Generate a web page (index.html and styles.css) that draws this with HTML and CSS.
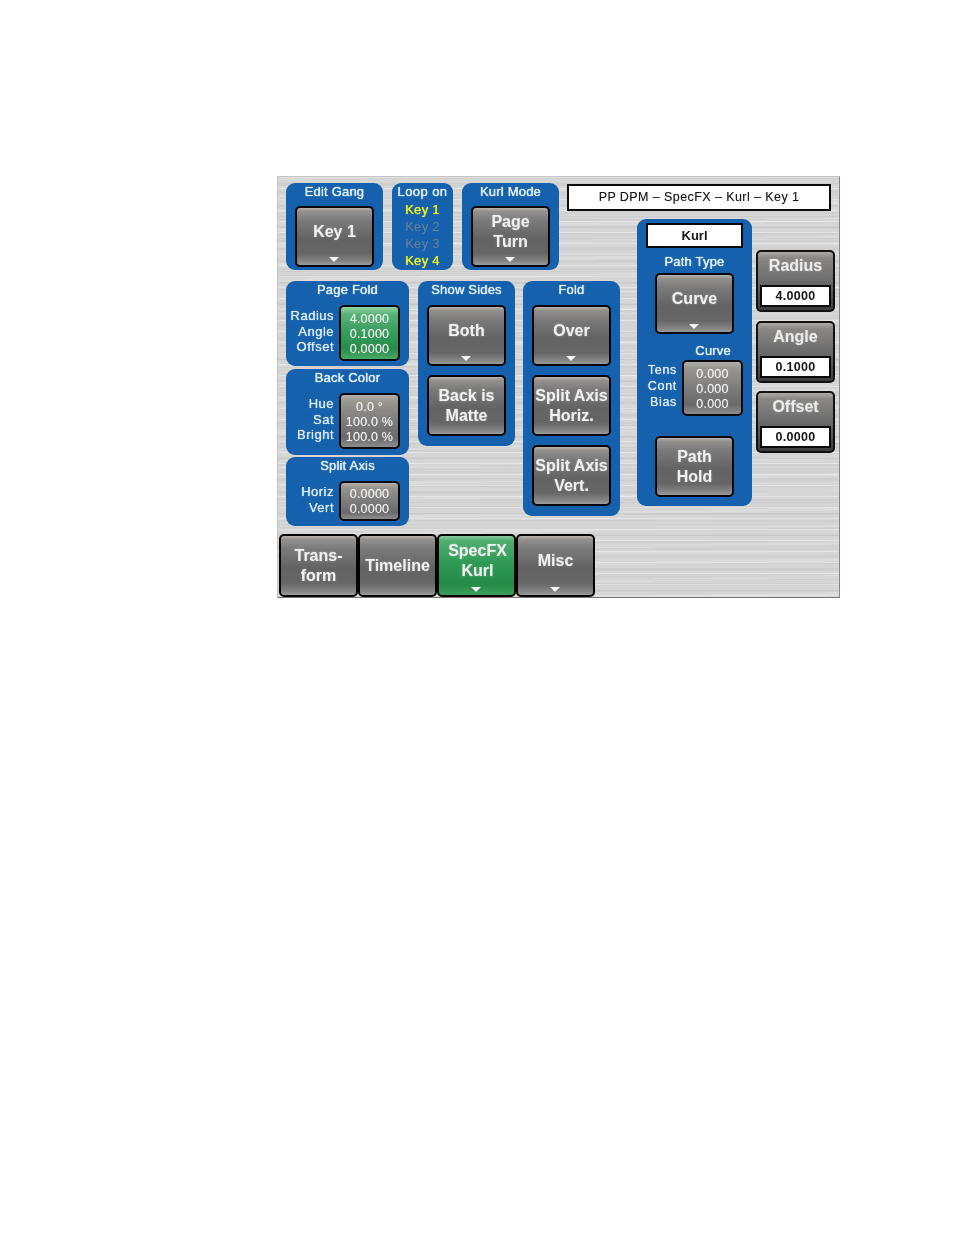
FILE: index.html
```html
<!DOCTYPE html>
<html lang="en">
<head>
<meta charset="utf-8">
<title>PP DPM - SpecFX - Kurl - Key 1</title>
<link rel="stylesheet" href="styles.css">
</head>
<body>
<main class="panel">
  <div class="board">
    <div class="top-row">
      <section class="group wide top-group">
        <h2 class="group-title tight">Edit Gang</h2>
        <button class="btn has-arrow">Key 1</button>
      </section>
      <section class="group loop top-group">
        <h2 class="group-title loop-title">Loop on</h2>
        <div class="key on">Key 1</div>
        <div class="key off">Key 2</div>
        <div class="key off">Key 3</div>
        <div class="key on">Key 4</div>
      </section>
      <section class="group wide top-group">
        <h2 class="group-title tight">Kurl Mode</h2>
        <button class="btn has-arrow">Page<br>Turn</button>
      </section>
    </div>

    <div class="title-box">PP DPM – SpecFX – Kurl – Key 1</div>

    <div class="lower-row">
      <div class="stack">
        <section class="group fold-group">
          <h2 class="group-title">Page Fold</h2>
          <div class="field">
            <div class="labels"><span>Radius</span><span>Angle</span><span>Offset</span></div>
            <div class="values green"><span>4.0000</span><span>0.1000</span><span>0.0000</span></div>
          </div>
        </section>
        <section class="group color-group">
          <h2 class="group-title">Back Color</h2>
          <div class="field">
            <div class="labels"><span>Hue</span><span>Sat</span><span>Bright</span></div>
            <div class="values"><span>0.0 °</span><span>100.0 %</span><span>100.0 %</span></div>
          </div>
        </section>
        <section class="group split-group">
          <h2 class="group-title">Split Axis</h2>
          <div class="field">
            <div class="labels two"><span>Horiz</span><span>Vert</span></div>
            <div class="values two"><span>0.0000</span><span>0.0000</span></div>
          </div>
        </section>
      </div>
      <section class="group wide column">
        <h2 class="group-title">Show Sides</h2>
        <button class="btn has-arrow">Both</button>
        <button class="btn">Back is<br>Matte</button>
      </section>
      <section class="group wide column">
        <h2 class="group-title">Fold</h2>
        <button class="btn has-arrow">Over</button>
        <button class="btn">Split Axis<br>Horiz.</button>
        <button class="btn">Split Axis<br>Vert.</button>
      </section>
    </div>

    <section class="group kurl">
      <div class="kurl-name">Kurl</div>
      <h2 class="group-title path-title">Path Type</h2>
      <button class="btn has-arrow">Curve</button>
      <h2 class="group-title curve-title">Curve</h2>
      <div class="field curve-field">
        <div class="labels"><span>Tens</span><span>Cont</span><span>Bias</span></div>
        <div class="values"><span>0.000</span><span>0.000</span><span>0.000</span></div>
      </div>
      <button class="btn hold">Path<br>Hold</button>
    </section>

    <div class="side">
      <div class="side-btn"><span class="side-label">Radius</span><span class="side-value">4.0000</span></div>
      <div class="side-btn"><span class="side-label">Angle</span><span class="side-value">0.1000</span></div>
      <div class="side-btn"><span class="side-label">Offset</span><span class="side-value">0.0000</span></div>
    </div>
  </div>

  <nav class="tabs">
    <button class="btn tab">Trans-<br>form</button>
    <button class="btn tab">Timeline</button>
    <button class="btn tab active has-arrow">SpecFX<br>Kurl</button>
    <button class="btn tab has-arrow">Misc</button>
  </nav>
</main>
</body>
</html>
```
FILE: styles.css
```css
* { box-sizing: border-box; }

html, body { margin: 0; background: #fff; }

body {
  width: 954px;
  height: 1235px;
  padding: 176px 0 0 277px;
  font-family: "Liberation Sans", Arial, sans-serif;
  overflow: hidden;
}

.panel {
  width: 563px;
  height: 422px;
  display: flex;
  flex-direction: column;
  padding: 6px 0 0 1px;
  border: 1px solid #c4c4c4;
  border-right-color: #8d7f9c;
  border-bottom-color: #777;
  background-color: #d6d6d6;
  background-image:
    repeating-linear-gradient(180deg, rgba(255,255,255,.34) 0 1px, transparent 1px 6px, rgba(0,0,0,.035) 6px 7px, transparent 7px 11px),
    repeating-linear-gradient(180deg, rgba(0,0,0,.028) 0 2px, transparent 2px 7px),
    repeating-linear-gradient(179deg, rgba(255,255,255,.14) 0 3px, transparent 3px 17px);
  filter: blur(.25px);
}

.board {
  display: grid;
  grid-template-columns: 281px 70px 119px 79px;
  grid-template-rows: 36px 62px 253px;
  margin-left: 7px;
}

.top-row {
  grid-column: 1;
  grid-row: 1 / 3;
  display: flex;
  gap: 9px;
  align-self: start;
}

.group {
  background: #1561ad;
  border-radius: 9px;
  color: #d4e8fb;
}

.group-title {
  margin: 0 0 6px;
  font-size: 13px;
  font-weight: 400;
  line-height: 18px;
  letter-spacing: .2px;
  text-align: center;
  color: #dcedfd;
  text-shadow: 0 0 1px #e2f0ff, 0 0 1px rgba(226,240,255,.6);
}

.group-title.tight { margin-bottom: 5px; }

.top-group { height: 87px; }

.wide {
  width: 97px;
  display: flex;
  flex-direction: column;
  align-items: center;
}

.loop { width: 61px; text-align: center; }

.group-title.loop-title { margin-bottom: 0; letter-spacing: .4px; }

.key {
  height: 17px;
  font-size: 13px;
  line-height: 17px;
  letter-spacing: .3px;
}

.key.on { color: #f0f51e; text-shadow: 0 0 1px #f0f51e; }
.key.off { color: #6f7f92; }

.btn {
  position: relative;
  display: flex;
  align-items: center;
  justify-content: center;
  flex: none;
  width: 79px;
  height: 61px;
  padding: 0;
  border: 2px solid #050505;
  border-radius: 5px;
  font-family: inherit;
  font-size: 16px;
  font-weight: 700;
  line-height: 20px;
  color: #f1f1f1;
  text-align: center;
  text-shadow: 0 0 2px rgba(255,255,255,.35);
  background: linear-gradient(180deg, #b8b3ae 0, #94908d 6%, #7a7a7a 22%, #636363 55%, #666 80%, #858585 94%, #9c9c9c 100%);
}

.has-arrow { padding-bottom: 10px; }

.has-arrow::after {
  content: "";
  position: absolute;
  left: 50%;
  bottom: 3px;
  margin-left: -5.5px;
  border-style: solid;
  border-width: 5px 5.5px 0;
  border-color: #f4f4f4 transparent transparent;
}

.title-box {
  grid-column: 2 / 5;
  grid-row: 1;
  align-self: start;
  height: 27px;
  margin: 1px 4px 0 0;
  border: 2px solid #0a0a0a;
  background: #fff;
  color: #141414;
  font-size: 12.5px;
  line-height: 23px;
  letter-spacing: .42px;
  text-align: center;
  text-shadow: 0 0 1px rgba(0,0,0,.35);
}

.lower-row {
  grid-column: 1 / 3;
  grid-row: 3;
  display: flex;
  align-items: flex-start;
  gap: 8px;
}

.stack {
  width: 123px;
  margin-right: 1px;
  display: flex;
  flex-direction: column;
}

.fold-group { height: 85px; }
.color-group { height: 86px; margin-top: 3px; }
.split-group { height: 69px; margin-top: 2px; }

.field {
  display: flex;
  gap: 5px;
  justify-content: flex-end;
  padding-right: 9px;
}

.labels {
  display: flex;
  flex-direction: column;
  justify-content: flex-start;
  text-align: right;
  font-size: 13px;
  line-height: 15.6px;
  letter-spacing: .5px;
  padding-top: 3px;
  color: #dcedfd;
  text-shadow: 0 0 1px #e2f0ff;
}

.values {
  width: 61px;
  height: 56px;
  display: flex;
  flex-direction: column;
  justify-content: center;
  align-items: center;
  padding-top: 2px;
  border: 2px solid #0a0a0a;
  border-radius: 5px;
  font-size: 12.5px;
  line-height: 15px;
  letter-spacing: .2px;
  color: #f0f0f0;
  text-shadow: 0 0 1px rgba(255,255,255,.5);
  background: linear-gradient(180deg, #b4b0ac 0, #98968f 12%, #7c7c7c 50%, #6a6a6a 82%, #8d8d8d 100%);
}

.values.two { height: 40px; padding-top: 1px; }

.values.green {
  background: linear-gradient(180deg, #95d5a6 0, #57b276 14%, #349d5a 50%, #288c49 80%, #48a866 100%);
}

.column { padding-bottom: 10px; gap: 9px; }
.column .group-title { margin-bottom: -3px; }

.kurl {
  grid-column: 3;
  grid-row: 2 / 4;
  align-self: start;
  width: 115px;
  height: 287px;
  padding-top: 4px;
  display: flex;
  flex-direction: column;
  align-items: center;
}

.kurl-name {
  width: 97px;
  height: 25px;
  border: 2px solid #0a0a0a;
  background: #fff;
  color: #141414;
  font-size: 13px;
  font-weight: 700;
  line-height: 21px;
  text-align: center;
}

.group-title.path-title { margin: 5px 0 2px; }

.group-title.curve-title {
  align-self: flex-end;
  margin: 8px 21px 0 0;
}

.curve-field {
  align-self: flex-end;
  padding-right: 9px;
}

.curve-field .labels { padding-top: 2px; font-size: 12.5px; line-height: 16px; letter-spacing: .7px; }

.hold { margin-top: 20px; }

.side {
  grid-column: 4;
  grid-row: 2 / 4;
  display: flex;
  flex-direction: column;
  gap: 8.5px;
  padding-top: 31px;
}

.side-btn {
  width: 79px;
  height: 62px;
  display: flex;
  flex-direction: column;
  align-items: center;
  border: 2px solid #111;
  border-radius: 5px;
  background: linear-gradient(180deg, #aeaaa6 0, #8a8886 10%, #6f6f6f 45%, #575757 72%, #3c3c3c 100%);
}

.side-label {
  height: 33px;
  font-size: 16px;
  font-weight: 700;
  line-height: 27px;
  color: #ececec;
  text-shadow: 0 0 2px rgba(255,255,255,.35);
}

.side-value {
  width: 71px;
  height: 22px;
  border: 2px solid #0a0a0a;
  background: #fff;
  color: #141414;
  font-size: 12.5px;
  font-weight: 700;
  line-height: 18px;
  letter-spacing: .3px;
  text-align: center;
}

.tabs {
  display: flex;
  margin-top: auto;
}

.tab {
  width: 79px;
  height: 63px;
}

.tab.active {
  padding-left: 2px;
  background: linear-gradient(180deg, #87c99a 0, #4fae70 8%, #2f9a55 45%, #248a47 80%, #3a9c5a 100%);
}
```
